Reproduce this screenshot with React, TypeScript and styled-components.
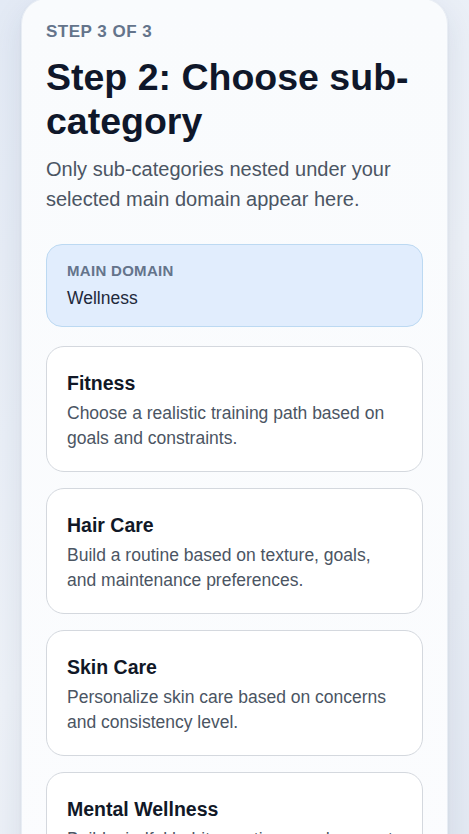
import styled, { createGlobalStyle } from "styled-components";

const GlobalStyle = createGlobalStyle`
    * { box-sizing: border-box; }
    html, body {
        margin: 0;
        padding: 0;
        font-family: "Liberation Sans", Arial, sans-serif;
        background: linear-gradient(135deg, #e3eaf5 0%, #eef2f8 50%, #e2e8f2 100%);
        min-height: 100%;
    }
    body { overflow: hidden; }
`;

const Page = styled.main`
    min-height: 834px;
    padding: 0 21px;
`;

const Panel = styled.section`
    margin-top: -2px;
    background: linear-gradient(180deg, #f9fbfd 0%, #fbfcfe 100%);
    border-radius: 26px;
    padding: 24px 24px 40px;
    box-shadow: 0 12px 32px rgba(30, 50, 90, 0.10), 0 1px 3px rgba(30, 50, 90, 0.06);
    border: 1px solid #e8edf4;
`;

const Eyebrow = styled.div`
    font-size: 17px;
    font-weight: 700;
    letter-spacing: 0.5px;
    color: #64748b;
    text-transform: uppercase;
    line-height: 18px;
`;

const Title = styled.h1`
    margin: 14px 0 0;
    font-size: 37.5px;
    line-height: 44px;
    font-weight: 700;
    color: #0f172a;
`;

const Lead = styled.p`
    margin: 11px 0 0;
    font-size: 20px;
    line-height: 30px;
    color: #4b5563;
`;

const DomainBox = styled.div`
    margin-top: 30px;
    background: #e1edfd;
    border: 1px solid #bcd9f2;
    border-radius: 16px;
    padding: 17px 20px 18px;
`;

const DomainLabel = styled.div`
    font-size: 15px;
    font-weight: 700;
    letter-spacing: 0.3px;
    color: #64748b;
    text-transform: uppercase;
    line-height: 18px;
`;

const DomainValue = styled.div`
    margin-top: 8px;
    font-size: 17.5px;
    line-height: 20px;
    color: #1e293b;
`;

const List = styled.div`
    margin-top: 19px;
    display: flex;
    flex-direction: column;
    gap: 16px;
`;

const Option = styled.button`
    display: block;
    width: 100%;
    text-align: left;
    font-family: inherit;
    background: #ffffff;
    border: 1px solid #d4d8de;
    border-radius: 18px;
    padding: 24px 20px 20px;
    cursor: pointer;
`;

const OptionTitle = styled.div`
    font-size: 19.5px;
    line-height: 24px;
    font-weight: 700;
    color: #111827;
`;

const OptionText = styled.div`
    margin-top: 6px;
    font-size: 17.5px;
    line-height: 25px;
    color: #4b5563;
`;

const options = [
    { title: "Fitness", text: "Choose a realistic training path based on goals and constraints." },
    { title: "Hair Care", text: "Build a routine based on texture, goals, and maintenance preferences." },
    { title: "Skin Care", text: "Personalize skin care based on concerns and consistency level." },
    { title: "Mental Wellness", text: "Build mindful habits, routines, and support for stress and sleep." },
];

function App() {
    return <>
        <GlobalStyle />
        <Page>
            <Panel>
                <Eyebrow>Step 3 of 3</Eyebrow>
                <Title>Step 2: Choose sub-category</Title>
                <Lead>Only sub-categories nested under your selected main domain appear here.</Lead>
                <DomainBox>
                    <DomainLabel>Main domain</DomainLabel>
                    <DomainValue>Wellness</DomainValue>
                </DomainBox>
                <List>
                    {options.map((o) => (
                        <Option key={o.title} type="button">
                            <OptionTitle>{o.title}</OptionTitle>
                            <OptionText>{o.text}</OptionText>
                        </Option>
                    ))}
                </List>
            </Panel>
        </Page>
    </>
}

export default App;
